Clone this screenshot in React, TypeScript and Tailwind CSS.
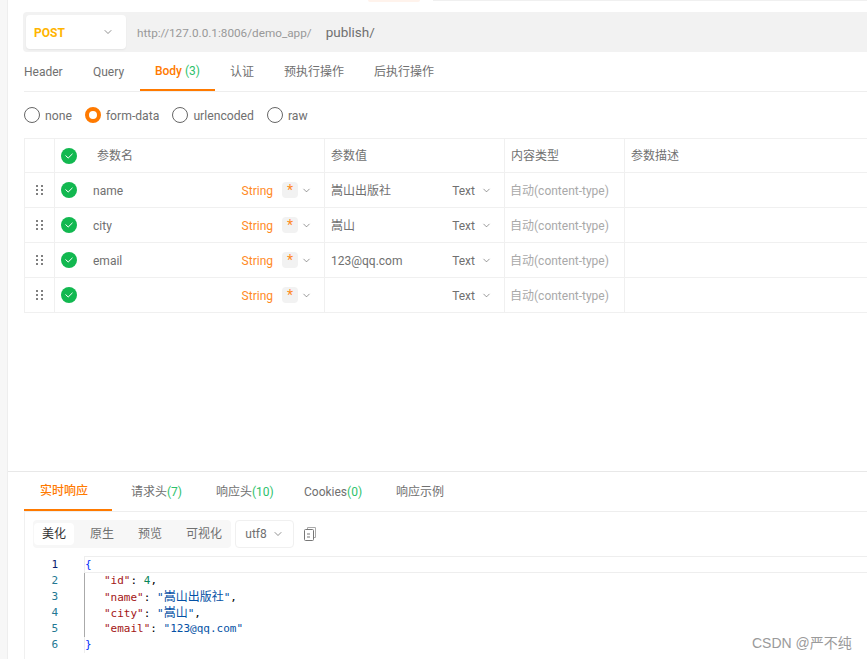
import { ChevronDown } from "lucide-react";

const FONT = "font-['Roboto','Noto_Sans_CJK_SC',sans-serif]";

const rows = [
  { name: "name", value: "嵩山出版社" },
  { name: "city", value: "嵩山" },
  { name: "email", value: "123@qq.com" },
  { name: "", value: "" },
];

function Check() {
  return (
    <div className="w-4 h-4 rounded-full bg-[#12b850] flex items-center justify-center">
      <svg width="8" height="6" viewBox="0 0 8 6" fill="none" stroke="#fff" strokeWidth="1">
        <path d="M0.5 2.5 L3.2 5 L7.5 0.8" />
      </svg>
    </div>
  );
}

function Grip() {
  return (
    <svg width="7" height="10" viewBox="0 0 7 10" fill="#808080">
      <rect x="0" y="0" width="2" height="2" />
      <rect x="5" y="0" width="2" height="2" />
      <rect x="0" y="4" width="2" height="2" />
      <rect x="5" y="4" width="2" height="2" />
      <rect x="0" y="8" width="2" height="2" />
      <rect x="5" y="8" width="2" height="2" />
    </svg>
  );
}

function Radio({ label, on }: { label: string; on?: boolean }) {
  return (
    <div className="flex items-center gap-[5px]">
      {on ? (
        <div className="w-4 h-4 rounded-full border-[4px] border-[#ff7a00] bg-white" />
      ) : (
        <div className="w-4 h-4 rounded-full border border-[#666] bg-white" />
      )}
      <span className="text-[12.2px] leading-[18px] pt-px text-[#707070]">{label}</span>
    </div>
  );
}

export default function App() {
  return (
    <div className={`${FONT} h-[659px] w-[867px] overflow-hidden bg-white flex relative`}>
      {/* bits of the row cut off at the top edge */}
      <div className="absolute left-[368px] top-0 w-[52px] h-[2px] rounded-b bg-[#fff3ec]" />
      <div className="absolute left-[433px] top-0 right-0 h-px bg-[#f0f0f0]" />

      {/* left strip */}
      <div className="w-2 shrink-0 bg-[#f7f7f7] border-r border-[#eeeeee]" />

      <div className="flex-1 min-w-0 flex flex-col">
        {/* top part */}
        <div className="h-[471px] shrink-0 pl-[15px] pt-3">
          {/* url bar */}
          <div className="h-10 bg-[#f2f2f2] rounded-l flex items-center pl-[3px]">
            <div className="w-[100px] h-[34px] bg-white rounded flex items-center justify-between pl-2 pr-3 shadow-[0_1px_2px_rgba(0,0,0,0.06)]">
              <span className="text-[12px] pt-px font-bold text-[#ffb400]">POST</span>
              <ChevronDown size={12} strokeWidth={1.3} className="text-[#555]" />
            </div>
            <span className="ml-[11px] pt-[3px] text-[11.75px] text-[#999]">http://127.0.0.1:8006/demo_app/</span>
            <span className="ml-[14px] pt-px text-[13.5px] text-[#707070]">publish/</span>
          </div>

          {/* tabs */}
          <div className="h-10 ml-px border-b border-[#eeeeee] flex text-[12px] text-[#707070]">
            <div className="h-full w-[69px] pt-px flex items-center">Header</div>
            <div className="h-full w-[47px] pt-px flex items-center">Query</div>
            <div className="h-full w-[75px] pt-px flex items-center justify-center border-b-2 border-[#ff7a00] font-medium text-[#ff7a00]">
              Body&nbsp;<span className="font-normal text-[#2dc26b]">(3)</span>
            </div>
            <div className="h-full ml-[15px] w-[54px] flex items-center">认证</div>
            <div className="h-full w-[90px] flex items-center">预执行操作</div>
            <div className="h-full flex items-center">后执行操作</div>
          </div>

          {/* body type */}
          <div className="h-[46px] ml-px flex items-center gap-[13px]">
            <Radio label="none" />
            <Radio label="form-data" on />
            <Radio label="urlencoded" />
            <Radio label="raw" />
          </div>

          {/* table */}
          <div className="ml-px border border-[#f0f0f0] border-r-0 text-[12px] text-[#707070]">
            <div className="h-[33px] flex">
              <div className="w-[30px] border-r border-[#f0f0f0]" />
              <div className="w-[270px] border-r border-[#f0f0f0] flex items-center pl-[6px]">
                <Check />
                <span className="ml-5">参数名</span>
              </div>
              <div className="w-[180px] border-r border-[#f0f0f0] flex items-center pl-[6px]">参数值</div>
              <div className="w-[120px] border-r border-[#f0f0f0] flex items-center pl-[6px]">内容类型</div>
              <div className="flex-1 flex items-center pl-[6px]">参数描述</div>
            </div>
            {rows.map((r, i) => (
              <div key={i} className="h-[35px] flex border-t border-[#f0f0f0]">
                <div className="w-[30px] border-r border-[#f0f0f0] flex items-center justify-center">
                  <Grip />
                </div>
                <div className="w-[270px] border-r border-[#f0f0f0] flex items-center pl-[6px] pr-3">
                  <Check />
                  <span className="ml-4 pt-[2px] flex-1">{r.name}</span>
                  <span className="pt-[2px] text-[#ff8a1f]">String</span>
                  <span className="ml-[9px] w-4 h-4 rounded-sm bg-[#f2f2f2] flex items-center justify-center text-[#ff8a1f] text-[14px] leading-[20px]">*</span>
                  <ChevronDown size={11} strokeWidth={1.3} className="ml-[3px] text-[#555]" />
                </div>
                <div className="w-[180px] border-r border-[#f0f0f0] flex items-center pl-[6px] pr-3">
                  <span className="flex-1 pt-[2px]">{r.value}</span>
                  <span className="pt-[2px]">Text</span>
                  <ChevronDown size={11} strokeWidth={1.3} className="ml-[6px] text-[#555]" />
                </div>
                <div className="w-[120px] border-r border-[#f0f0f0] flex items-center pl-[5px] pt-[2px] text-[#a9a9a9]">
                  自动(content-type)
                </div>
                <div className="flex-1" />
              </div>
            ))}
          </div>
        </div>

        {/* response */}
        <div className="flex-1 min-h-0 border-t border-[#e8e8e8] pl-4">
          <div className="h-10 border-b border-[#eeeeee] flex items-center text-[12px] text-[#707070]">
            <div className="h-full w-[88px] flex items-center pl-4 border-b-2 border-[#ff7a00] font-medium text-[#ff7a00]">
              实时响应
            </div>
            <div className="ml-[19px] w-[85px]">
              请求头<span className="text-[#2dc26b]">(7)</span>
            </div>
            <div className="w-[88px]">
              响应头<span className="text-[#2dc26b]">(10)</span>
            </div>
            <div className="w-[92px]">
              Cookies<span className="text-[#2dc26b]">(0)</span>
            </div>
            <div>响应示例</div>
          </div>

          <div className="border-l border-[#f0f0f0] h-[147px]">
            {/* toolbar */}
            <div className="h-11 pl-2 pt-2 flex items-start">
              <div className="h-7 w-[198px] bg-[#f7f7f7] rounded flex items-center pl-[1px] text-[12px] text-[#707070]">
                <div className="h-[22px] w-10 bg-white rounded text-[#333] flex items-center justify-center">美化</div>
                <div className="ml-1 w-[48px] text-center">原生</div>
                <div className="w-[48px] text-center">预览</div>
                <div className="ml-[3px] w-[54px] text-center">可视化</div>
              </div>
              <div className="ml-1 h-7 w-[59px] border border-[#f0f0f0] rounded flex items-center justify-center gap-[5px] text-[12px] text-[#707070]">
                utf8
                <ChevronDown size={12} strokeWidth={1.3} className="text-[#555]" />
              </div>
              <svg className="ml-[10px] mt-[7px]" width="12" height="14" viewBox="0 0 12 14" fill="none" strokeWidth="1">
                <path d="M3.5 2.5 V0.5 H11.5 V10.5 H9.5" stroke="#aaa" />
                <rect x="0.5" y="2.5" width="9" height="11" rx="1" stroke="#777" />
                <path d="M3 7 H6 M3 10 H6" stroke="#777" />
              </svg>
            </div>

            {/* code */}
            <div className="flex font-['DejaVu_Sans_Mono','Noto_Sans_CJK_SC',monospace] text-[11px] leading-4">
              <div className="w-[59px] text-right pr-[26px] pt-[1px] text-[#237893]">
                <div className="text-[#0b216f]">1</div>
                <div>2</div>
                <div>3</div>
                <div>4</div>
                <div>5</div>
                <div>6</div>
              </div>
              <div className="flex-1 border-t border-l border-[#eeeeee] whitespace-pre">
                <div className="border-b border-[#eeeeee] h-[16px] text-[#0431fa]">{"{"}</div>
                <div className="border-l border-[#aaaaaa] pl-[19px] -ml-px">
                  <div className="h-4">
                    <span className="text-[#a31515]">"id"</span>: <span className="text-[#098658]">4</span>,
                  </div>
                  <div className="h-4">
                    <span className="text-[#a31515]">"name"</span>: <span className="text-[#0451a5]">"<span className="text-[12px]">嵩山出版社</span>"</span>,
                  </div>
                  <div className="h-4">
                    <span className="text-[#a31515]">"city"</span>: <span className="text-[#0451a5]">"<span className="text-[12px]">嵩山</span>"</span>,
                  </div>
                  <div className="h-4">
                    <span className="text-[#a31515]">"email"</span>: <span className="text-[#0451a5]">"123@qq.com"</span>
                  </div>
                </div>
                <div className="text-[#0431fa]">{"}"}</div>
              </div>
            </div>
          </div>
        </div>
      </div>

      {/* CSDN watermark */}
      <div className="absolute left-[752px] top-[634px] font-['Liberation_Sans','Noto_Sans_CJK_SC',sans-serif] text-[14px] leading-[18px] text-[#9a9a9a]">
        CSDN @严不纯
      </div>
    </div>
  );
}
